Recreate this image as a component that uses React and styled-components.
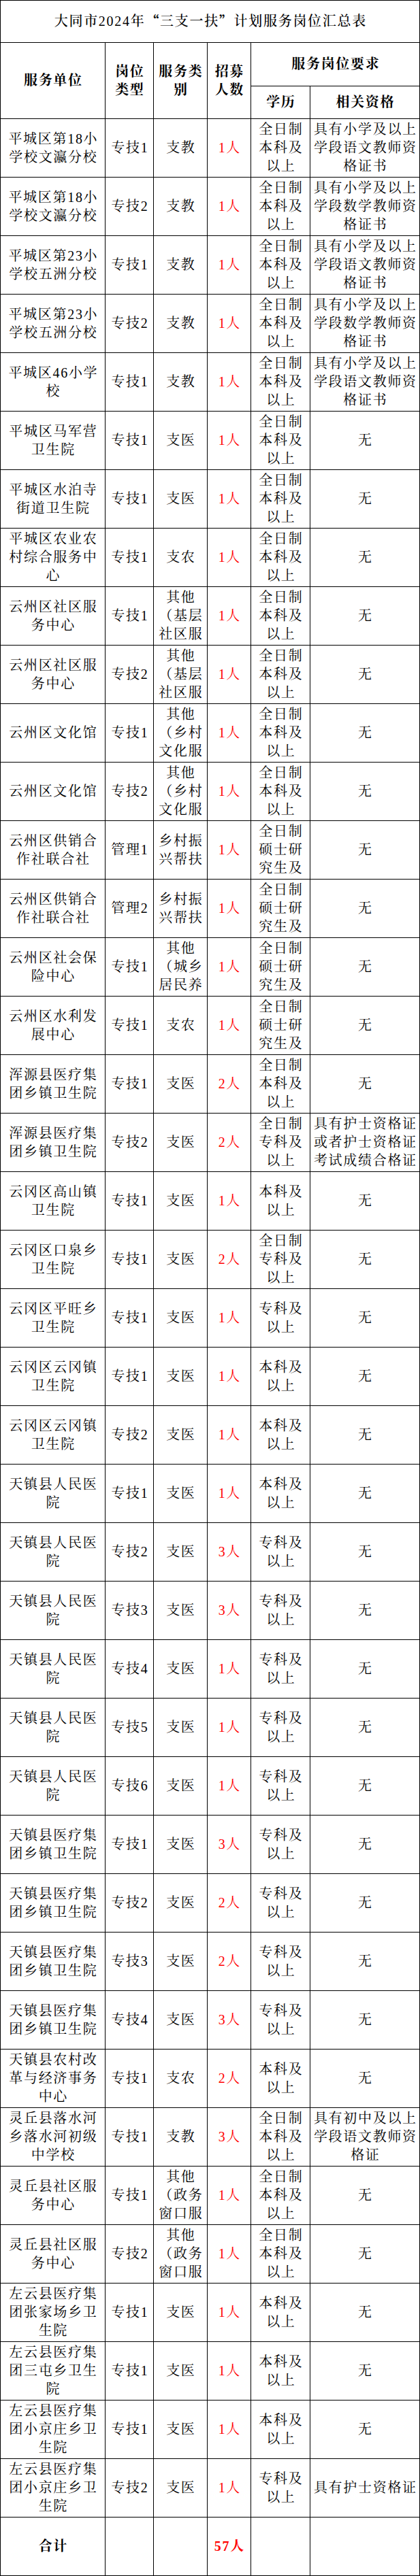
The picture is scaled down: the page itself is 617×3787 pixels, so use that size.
import React from "react";
import styled, { createGlobalStyle } from "styled-components";

const GlobalStyle = createGlobalStyle`
  html, body {
    margin: 0;
    padding: 0;
    background: #fff;
  }
  body {
    font-family: "Liberation Serif", "Noto Serif CJK SC", "Noto Sans CJK SC", serif;
  }
`;

const Sheet = styled.div`
  display: grid;
  grid-template-columns: 153px 70px 78px 63px 86px 160px;
  grid-template-rows: 61px 63px 47px repeat(42, 85px);
  gap: 1px;
  padding: 1px;
  width: 617px;
  box-sizing: border-box;
  background: #000;
`;

const Cell = styled.div`
  grid-column: ${(p) => (p.$cols ? `span ${p.$cols}` : "auto")};
  grid-row: ${(p) => (p.$rows ? `span ${p.$rows}` : "auto")};
  display: flex;
  align-items: center;
  justify-content: center;
  overflow: hidden;
  background: #fff;
  color: ${(p) => (p.$red ? "#ff0000" : "#000")};
  font-size: 20px;
  font-weight: ${(p) => (p.$bold ? 700 : 400)};
  line-height: 26.7px;
  letter-spacing: 1.7px;
  padding-left: 1.7px;
  text-align: center;
  white-space: pre;
`;

const TitleCell = styled(Cell)`
  font-weight: 500;
`;

const Quote = styled.span`
  font-family: "Noto Sans CJK SC", sans-serif;
`;

const EDU_BK = "全日制\n本科及\n以上";
const EDU_ZK = "全日制\n专科及\n以上";
const EDU_SS = "全日制\n硕士研\n究生及";
const BK = "本科及\n以上";
const ZK = "专科及\n以上";
const YW = "具有小学及以上\n学段语文教师资\n格证书";
const SX = "具有小学及以上\n学段数学教师资\n格证书";
const NO = "无";

const rows = [
  ["平城区第18小\n学校文瀛分校", "专技1", "支教", "1人", EDU_BK, YW],
  ["平城区第18小\n学校文瀛分校", "专技2", "支教", "1人", EDU_BK, SX],
  ["平城区第23小\n学校五洲分校", "专技1", "支教", "1人", EDU_BK, YW],
  ["平城区第23小\n学校五洲分校", "专技2", "支教", "1人", EDU_BK, SX],
  ["平城区46小学\n校", "专技1", "支教", "1人", EDU_BK, YW],
  ["平城区马军营\n卫生院", "专技1", "支医", "1人", EDU_BK, NO],
  ["平城区水泊寺\n街道卫生院", "专技1", "支医", "1人", EDU_BK, NO],
  ["平城区农业农\n村综合服务中\n心", "专技1", "支农", "1人", EDU_BK, NO],
  ["云州区社区服\n务中心", "专技1", "其他\n（基层\n社区服", "1人", EDU_BK, NO],
  ["云州区社区服\n务中心", "专技2", "其他\n（基层\n社区服", "1人", EDU_BK, NO],
  ["云州区文化馆", "专技1", "其他\n（乡村\n文化服", "1人", EDU_BK, NO],
  ["云州区文化馆", "专技2", "其他\n（乡村\n文化服", "1人", EDU_BK, NO],
  ["云州区供销合\n作社联合社", "管理1", "乡村振\n兴帮扶", "1人", EDU_SS, NO],
  ["云州区供销合\n作社联合社", "管理2", "乡村振\n兴帮扶", "1人", EDU_SS, NO],
  ["云州区社会保\n险中心", "专技1", "其他\n（城乡\n居民养", "1人", EDU_SS, NO],
  ["云州区水利发\n展中心", "专技1", "支农", "1人", EDU_SS, NO],
  ["浑源县医疗集\n团乡镇卫生院", "专技1", "支医", "2人", EDU_BK, NO],
  [
    "浑源县医疗集\n团乡镇卫生院",
    "专技2",
    "支医",
    "2人",
    EDU_ZK,
    "具有护士资格证\n或者护士资格证\n考试成绩合格证",
  ],
  ["云冈区高山镇\n卫生院", "专技1", "支医", "1人", BK, NO],
  ["云冈区口泉乡\n卫生院", "专技1", "支医", "2人", EDU_ZK, NO],
  ["云冈区平旺乡\n卫生院", "专技1", "支医", "1人", ZK, NO],
  ["云冈区云冈镇\n卫生院", "专技1", "支医", "1人", BK, NO],
  ["云冈区云冈镇\n卫生院", "专技2", "支医", "1人", BK, NO],
  ["天镇县人民医\n院", "专技1", "支医", "1人", BK, NO],
  ["天镇县人民医\n院", "专技2", "支医", "3人", ZK, NO],
  ["天镇县人民医\n院", "专技3", "支医", "3人", ZK, NO],
  ["天镇县人民医\n院", "专技4", "支医", "1人", ZK, NO],
  ["天镇县人民医\n院", "专技5", "支医", "1人", ZK, NO],
  ["天镇县人民医\n院", "专技6", "支医", "1人", ZK, NO],
  ["天镇县医疗集\n团乡镇卫生院", "专技1", "支医", "3人", ZK, NO],
  ["天镇县医疗集\n团乡镇卫生院", "专技2", "支医", "2人", ZK, NO],
  ["天镇县医疗集\n团乡镇卫生院", "专技3", "支医", "2人", ZK, NO],
  ["天镇县医疗集\n团乡镇卫生院", "专技4", "支医", "3人", ZK, NO],
  ["天镇县农村改\n革与经济事务\n中心", "专技1", "支农", "2人", BK, NO],
  [
    "灵丘县落水河\n乡落水河初级\n中学校",
    "专技1",
    "支教",
    "3人",
    EDU_BK,
    "具有初中及以上\n学段语文教师资\n格证",
  ],
  ["灵丘县社区服\n务中心", "专技1", "其他\n（政务\n窗口服", "1人", EDU_BK, NO],
  ["灵丘县社区服\n务中心", "专技2", "其他\n（政务\n窗口服", "1人", EDU_BK, NO],
  ["左云县医疗集\n团张家场乡卫\n生院", "专技1", "支医", "1人", BK, NO],
  ["左云县医疗集\n团三屯乡卫生\n院", "专技1", "支医", "1人", BK, NO],
  ["左云县医疗集\n团小京庄乡卫\n生院", "专技1", "支医", "1人", BK, NO],
  ["左云县医疗集\n团小京庄乡卫\n生院", "专技2", "支医", "1人", ZK, "具有护士资格证"],
];

const App = () => {
  return (
    <>
      <GlobalStyle />
      <Sheet>
        <TitleCell $cols={6}>
          大同市2024年<Quote>“</Quote>三支一扶<Quote>”</Quote>计划服务岗位汇总表
        </TitleCell>

        <Cell $rows={2} $bold>服务单位</Cell>
        <Cell $rows={2} $bold>{"岗位\n类型"}</Cell>
        <Cell $rows={2} $bold>{"服务类\n别"}</Cell>
        <Cell $rows={2} $bold>{"招募\n人数"}</Cell>
        <Cell $cols={2} $bold>服务岗位要求</Cell>
        <Cell $bold>学历</Cell>
        <Cell $bold>相关资格</Cell>

        {rows.map((row, i) =>
          row.map((text, j) => (
            <Cell key={`${i}-${j}`} $red={j === 3}>
              {text}
            </Cell>
          ))
        )}

        <Cell $bold>合计</Cell>
        <Cell />
        <Cell />
        <Cell $red $bold>57人</Cell>
        <Cell />
        <Cell />
      </Sheet>
    </>
  );
};

export default App;
